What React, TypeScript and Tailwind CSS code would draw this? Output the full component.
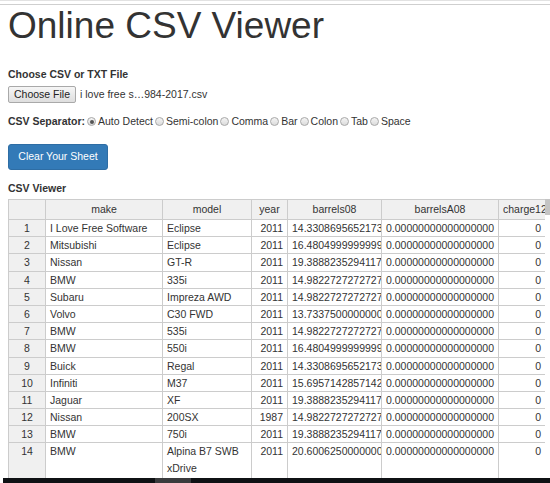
import React from 'react';

type Row = [string, string, string, string, string, string];

const ZEROS = '0.00000000000000000';

const rows: Row[] = [
  ['I Love Free Software', 'Eclipse', '2011', '14.3308695652173913', ZEROS, '0'],
  ['Mitsubishi', 'Eclipse', '2011', '16.4804999999999993', ZEROS, '0'],
  ['Nissan', 'GT-R', '2011', '19.3888235294117647', ZEROS, '0'],
  ['BMW', '335i', '2011', '14.9822727272727273', ZEROS, '0'],
  ['Subaru', 'Impreza AWD', '2011', '14.9822727272727273', ZEROS, '0'],
  ['Volvo', 'C30 FWD', '2011', '13.7337500000000000', ZEROS, '0'],
  ['BMW', '535i', '2011', '14.9822727272727273', ZEROS, '0'],
  ['BMW', '550i', '2011', '16.4804999999999993', ZEROS, '0'],
  ['Buick', 'Regal', '2011', '14.3308695652173913', ZEROS, '0'],
  ['Infiniti', 'M37', '2011', '15.6957142857142857', ZEROS, '0'],
  ['Jaguar', 'XF', '2011', '19.3888235294117647', ZEROS, '0'],
  ['Nissan', '200SX', '1987', '14.9822727272727273', ZEROS, '0'],
  ['BMW', '750i', '2011', '19.3888235294117647', ZEROS, '0'],
  ['BMW', 'Alpina B7 SWB xDrive', '2011', '20.6006250000000000', ZEROS, '0'],
];

const separators = ['Auto Detect', 'Semi-colon', 'Comma', 'Bar', 'Colon', 'Tab', 'Space'];

const cols = 'grid-cols-[37px_117px_89px_36px_94px_117px_60px]';

const Radio = ({ checked }: { checked?: boolean }) => (
  <span className="inline-flex items-center justify-center w-[9px] h-[9px] rounded-full border border-[#a8a8a8] bg-gradient-to-b from-[#f4f4f4] to-[#dcdcdc] ml-[2px] mr-[2px]">
    {checked && <span className="w-[4px] h-[4px] rounded-full bg-[#555]" />}
  </span>
);

const base = 'border-r border-b border-[#cccccc] px-[4px] overflow-hidden';
const cell = `${base} whitespace-nowrap`;

export default function App() {
  return (
    <div className="w-[550px] h-[483px] overflow-hidden bg-white text-[#333] relative" style={{ fontFamily: '"Liberation Sans", Arial, sans-serif' }}>
      <div className="h-[5px] border-t border-[#e2e2e2] border-b border-b-[#cfcfcf]" />

      <div className="pl-[8px]">
        <h1 className="text-[37px] leading-[38px] mt-[2px] text-[#333]">Online CSV Viewer</h1>

        <div className="mt-[23px] text-[10.5px] font-bold leading-[13px]">Choose CSV or TXT File</div>

        <div className="mt-[5px] flex items-center text-[10.5px]">
          <button className="h-[17px] w-[68px] border border-[#a9a9a9] rounded-[2px] bg-gradient-to-b from-[#f6f6f6] to-[#dedede] text-[10.5px] text-[#222]">
            Choose File
          </button>
          <span className="ml-[4px] text-[#333]">i love free s…984-2017.csv</span>
        </div>

        <div className="mt-[12px] flex items-center text-[10.5px] leading-[13px]">
          <span className="font-bold">CSV Separator:</span>
          {separators.map((s, i) => (
            <span key={s} className="inline-flex items-center">
              <Radio checked={i === 0} />
              <span>{s}</span>
            </span>
          ))}
        </div>

        <button className="mt-[16px] h-[26px] w-[100px] rounded-[3px] bg-[#337ab7] border border-[#2e6da4] text-white text-[10.5px]">
          Clear Your Sheet
        </button>

        <div className="mt-[12px] text-[10.5px] font-bold leading-[13px]">CSV Viewer</div>
      </div>

      <div className="ml-[8px] mt-[4px] w-[537px] overflow-hidden border-t border-l border-[#cccccc] text-[10.5px] text-[#333]">
        <div className={`grid ${cols} h-[20px] bg-[#f0f0f0] leading-[19px] text-center`}>
          <div className={cell} />
          <div className={cell}>make</div>
          <div className={cell}>model</div>
          <div className={cell}>year</div>
          <div className={cell}>barrels08</div>
          <div className={cell}>barrelsA08</div>
          <div className={`${cell} text-left`}>charge12</div>
        </div>
        {rows.map((r, i) => {
          const tall = i === rows.length - 1;
          return (
            <div key={i} className={`grid ${cols} ${tall ? 'h-[36px]' : 'h-[17.2px]'} leading-[17px]`}>
              <div className={`${cell} bg-[#f0f0f0] text-center`}>{i + 1}</div>
              <div className={cell}>{r[0]}</div>
              <div className={tall ? `${base} whitespace-normal` : cell}>{r[1]}</div>
              <div className={`${cell} text-right`}>{r[2]}</div>
              <div className={`${cell} text-clip`}>{r[3]}</div>
              <div className={cell}>{r[4]}</div>
              <div className={`${cell} text-right pr-[17px]`}>{r[5]}</div>
            </div>
          );
        })}
      </div>

      {/* vertical scrollbar */}
      <div className="absolute left-[545px] top-[199px] w-[5px] h-[16px] bg-[#c4c4c4]" />
      {/* horizontal scrollbar */}
      <div className="absolute left-[3px] right-0 top-[478px] h-[5px] bg-[#0f1114]">
        <div className="absolute left-[152px] w-[36px] h-full bg-[#3a3b3d]" />
      </div>
    </div>
  );
}
